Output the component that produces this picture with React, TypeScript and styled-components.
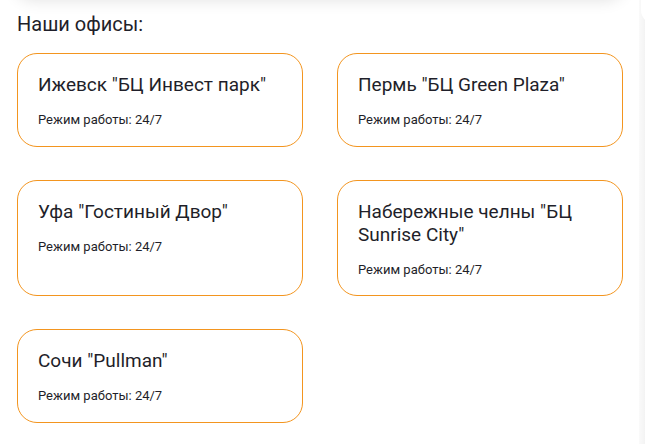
import React from 'react';
import styled, { createGlobalStyle } from 'styled-components';

const GlobalStyle = createGlobalStyle`
  html, body {
    margin: 0;
    padding: 0;
    background: #ffffff;
    overflow: hidden;
  }
  body {
    font-family: Roboto, 'Noto Sans', 'Liberation Sans', sans-serif;
    color: #1f1f2a;
  }
`;

const Page = styled.div`
  display: flex;
  width: 645px;
  height: 444px;
  overflow: hidden;
`;

const Main = styled.main`
  flex: 0 0 639px;
  display: flex;
  flex-direction: column;
`;

const Aside = styled.aside`
  flex: 1;
  background: linear-gradient(to right, #fafafa, #f3f3f3);
  position: relative;

  &::before {
    content: '';
    position: absolute;
    top: -20px;
    left: 2px;
    width: 40px;
    height: 44px;
    background: #ffffff;
    border-radius: 0 0 0 14px;
  }
`;

const TopPanel = styled.div`
  flex: 0 0 40px;
  margin: -42px 14px 0 14px;
  border-radius: 20px;
  background: #ffffff;
  box-shadow: 0 2px 16px rgba(0, 0, 0, 0.12);
`;

const Section = styled.section`
  padding: 14px 0 0 17px;
`;

const Heading = styled.h2`
  margin: 0 0 17px;
  font-size: 20px;
  font-weight: 400;
  line-height: 24px;
  color: #1f1f2a;
`;

const Grid = styled.div`
  display: grid;
  grid-template-columns: 286px 286px;
  column-gap: 34px;
  row-gap: 33px;
`;

const Card = styled.div<{ $tall?: boolean }>`
  box-sizing: border-box;
  min-height: ${(p) => (p.$tall ? 116 : 94)}px;
  padding: 19px 20px 16px 20px;
  border: 1px solid #f3951f;
  border-radius: 20px;
  background: #ffffff;
  display: flex;
  flex-direction: column;
`;

const CardTitle = styled.div`
  font-size: 19px;
  line-height: 23px;
  font-weight: 400;
  color: #1f1f2a;
`;

const Hours = styled.div`
  margin-top: 16px;
  font-size: 13px;
  line-height: 16px;
  color: #1f1f2a;
`;

const offices = [
  'Ижевск "БЦ Инвест парк"',
  'Пермь "БЦ Green Plaza"',
  'Уфа "Гостиный Двор"',
  'Набережные челны "БЦ Sunrise City"',
  'Сочи "Pullman"',
];

export default function App() {
  return (
    <>
      <GlobalStyle />
      <Page>
        <Main>
          <TopPanel />
          <Section>
            <Heading>Наши офисы:</Heading>
            <Grid>
              {offices.map((name, i) => (
                <Card key={name} $tall={i === 2 || i === 3}>
                  <CardTitle>{name}</CardTitle>
                  <Hours>Режим работы: 24/7</Hours>
                </Card>
              ))}
            </Grid>
          </Section>
        </Main>
        <Aside />
      </Page>
    </>
  );
}
